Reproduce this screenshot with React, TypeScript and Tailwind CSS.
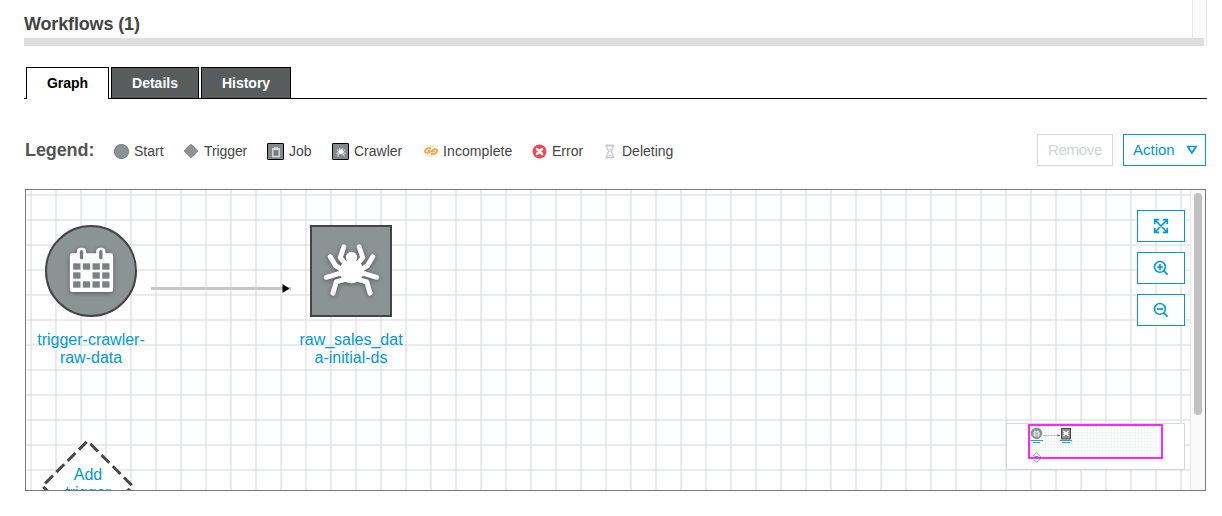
import React from 'react';

const SPIDER_LEGS =
  'M221 109L210 142L224 158M180 139L195 165L216 179M168 201L205 190H240M188 249L198 215L230 206M267 109L278 142L264 158M308 139L293 165L272 179M320 201L283 190H248M300 249L290 215L258 206';

function Spider({ className }: { className: string }) {
  return (
    <svg viewBox="155 95 178 165" className={className}>
      <path d={SPIDER_LEGS} fill="none" stroke="#fff" strokeWidth="15" strokeLinecap="round" strokeLinejoin="round" />
      <circle cx="244" cy="141" r="17" fill="#fff" />
      <path d="M232 150H256C272 156 283 168 281 184C279 203 262 219 244 219C226 219 209 203 207 184C205 168 216 156 232 150Z" fill="#fff" />
    </svg>
  );
}

function Calendar({ className }: { className: string }) {
  const cells = [0, 1, 2].flatMap((r) => [0, 1, 2, 3].map((c) => [r, c])).filter(([r, c]) => !(r === 1 && c === 1));
  return (
    <svg viewBox="146 186 134 138" className={className}>
      <rect x="148" y="205" width="130" height="116" rx="7" fill="#fff" />
      <rect x="169" y="188" width="28" height="44" rx="12" fill="#fff" />
      <rect x="227" y="188" width="28" height="44" rx="12" fill="#fff" />
      <rect x="178" y="195" width="10" height="28" rx="5" fill="#747c7c" />
      <rect x="236" y="195" width="10" height="28" rx="5" fill="#747c7c" />
      {cells.map(([r, c]) => (
        <rect key={`${r}-${c}`} x={158 + c * 29} y={235 + r * 27} width="22" height="19" fill="#7a8282" />
      ))}
    </svg>
  );
}

function Tab({ label, width, active }: { label: string; width: string; active?: boolean }) {
  return (
    <div
      className={`flex items-center justify-center border border-black text-[14px] font-bold ${width} ${
        active ? 'h-[32px] border-b-0 bg-white pb-px text-black' : 'h-[32px] bg-[#585c5c] text-white'
      }`}
    >
      {label}
    </div>
  );
}

function LegendItem({ label, className, children }: { label: string; className: string; children: React.ReactNode }) {
  return (
    <div className={`flex shrink-0 items-center whitespace-nowrap text-[14px] ${className}`}>
      {children}
      <span>{label}</span>
    </div>
  );
}

function Clipboard() {
  return (
    <svg viewBox="0 0 10 12" className="h-3 w-2.5">
      <rect x="1.8" y="2.8" width="6.4" height="7.7" fill="#747c7c" stroke="#d5dada" strokeWidth="1.5" />
      <rect x="3" y="1.2" width="4" height="3" fill="#d5dada" />
    </svg>
  );
}

function Magnifier({ plus }: { plus?: boolean }) {
  return (
    <svg viewBox="0 0 16 16" className="size-4" fill="none" stroke="#0099d6" strokeWidth="1.6">
      <circle cx="6.9" cy="6.9" r="5.4" />
      <path d="M10.8 10.8L14.6 14.6" strokeWidth="1.8" />
      <path d={plus ? 'M4 7H10M7 4V10' : 'M4 7H10'} strokeWidth="1.7" />
    </svg>
  );
}

function ToolButton({ children }: { children: React.ReactNode }) {
  return (
    <button className="flex h-8 w-12 items-center justify-center border border-[#0099d6] bg-white">{children}</button>
  );
}

function MiniMap() {
  return (
    <svg viewBox="0 0 179 48" className="absolute left-[980px] top-[233px] h-12 w-[179px]">
      <defs>
        <pattern id="dots" width="3" height="3" patternUnits="userSpaceOnUse">
          <path d="M0 .5H3M.5 0V3" stroke="#eef0f0" strokeWidth=".6" />
        </pattern>
      </defs>
      <rect x=".5" y=".5" width="178" height="46" fill="#fff" stroke="#d5d8d8" />
      <rect x="22" y="1" width="134" height="34" fill="url(#dots)" />
      <path d="M37 12.5H52" stroke="#c4c4c4" />
      <path d="M51.5 11L54 12.5L51.5 14" fill="#777" />
      <circle cx="30.5" cy="10.3" r="5.4" fill="#8a9292" stroke="#6e7575" strokeWidth=".6" />
      <path d="M28 9H33V13H28ZM29 7.5V9M32 7.5V9M28 11H33" fill="none" stroke="#fff" strokeWidth=".9" />
      <rect x="55.5" y="5.5" width="9" height="10.5" fill="#899191" stroke="#484a4a" />
      <path d="M57.5 8L62.5 13M62.5 8L57.5 13M57.5 10.5H62.5" stroke="#fff" strokeWidth="1.2" />
      <path d="M24.5 17.5H37M27 19.5H34M54 17.5H66M56 19.5H64" stroke="#2b9fd4" strokeWidth="1" />
      <path d="M30.3 29.5L35.3 34.5L30.3 39.5L25.3 34.5Z" fill="#fff" stroke="#777" strokeWidth=".8" strokeDasharray="3 .8" />
      <rect x="23" y="2" width="133" height="33" fill="none" stroke="#ff10ff" strokeWidth="1.8" />
      <path d="M28.5 33.5H32.5" stroke="#2b9fd4" strokeWidth="1.2" />
    </svg>
  );
}

export default function App() {
  return (
    <div className="h-[516px] w-[1222px] overflow-hidden bg-white font-['Liberation_Sans',Arial,sans-serif] text-[#444]">
      <header className="flex h-[46px] flex-col pl-6">
        <div className="flex h-[38px] w-[1183px] justify-between">
          <h1 className="pt-[10px] text-[18px] font-bold leading-7 tracking-[-0.15px]">Workflows (1)</h1>
          <div className="h-[46px] w-[15px] border-x border-[#e8e8e8] bg-[#fafafa]" />
        </div>
        <div className="relative h-2 w-[1180px] shrink-0 bg-[#dedede]" />
      </header>

      <nav className="ml-6 mt-[21px] flex h-8 w-[1183px]">
        <div className="w-0.5 border-b border-black" />
        <Tab label="Graph" width="w-[83px]" active />
        <div className="w-0.5 border-b border-black" />
        <Tab label="Details" width="w-[88px]" />
        <div className="w-0.5 border-b border-black" />
        <Tab label="History" width="w-[90px]" />
        <div className="flex-1 border-b border-black" />
      </nav>

      <div className="ml-[25px] mt-[35px] flex h-8 w-[1181px] items-center">
        <div className="w-[89px] shrink-0 text-[18px] font-bold tracking-[-0.1px] text-[#545454]">Legend:</div>
        <LegendItem label="Start" className="w-[69px] gap-[5px] pt-0.5">
          <span className="size-[15px] rounded-full border border-[#6e7575] bg-[#8b9393]" />
        </LegendItem>
        <LegendItem label="Trigger" className="w-[84px] gap-[5px] pt-0.5 tracking-[-0.1px]">
          <svg viewBox="0 0 16 16" className="size-4">
            <path d="M8 1.2L14.8 8L8 14.8L1.2 8Z" fill="#8b9393" stroke="#7a8282" />
          </svg>
        </LegendItem>
        <LegendItem label="Job" className="w-[65px] gap-[5px] pt-[3px]">
          <span className="flex size-[17px] items-center justify-center rounded-[1px] border border-black bg-[#818989]">
            <Clipboard />
          </span>
        </LegendItem>
        <LegendItem label="Crawler" className="w-[91px] gap-[5px] pt-[3px]">
          <span className="flex size-[17px] items-center justify-center rounded-[1px] border border-black bg-[#818989]">
            <Spider className="size-[10px]" />
          </span>
        </LegendItem>
        <LegendItem label="Incomplete" className="w-[109px] gap-1 pt-0.5 tracking-[0.1px]">
          <svg viewBox="0 0 16 16" className="size-4" fill="none" stroke="#f8a64e" strokeLinecap="round">
            <path d="M7.2 5.3C4.9 4.5 1.8 6.3 1.9 8.4C2.1 10.3 4.6 10 6.5 9M8.8 10.8C11.1 11.6 14.2 9.8 14.1 7.7C13.9 5.8 11.4 6.1 9.5 7.1" strokeWidth="2" />
            <path d="M5.4 7.5L8 8.2L11 8.4" strokeWidth="1.6" />
            <path d="M7.8 2.9L8 3.6M10.3 2.7L9.8 3.6M12.2 3.6L11.6 4M4 12.2L4.4 12M6 13.5L6.3 12.7M8.4 13.3L8.1 12.6" strokeWidth=".8" />
          </svg>
        </LegendItem>
        <LegendItem label="Error" className="w-[72px] gap-[5px] pt-0.5">
          <svg viewBox="0 0 15 15" className="size-[15px]">
            <circle cx="7.5" cy="7.5" r="6.9" fill="#f6454f" />
            <path d="M5 5L10 10M10 5L5 10" stroke="#fff" strokeWidth="2.5" strokeLinecap="round" />
          </svg>
        </LegendItem>
        <LegendItem label="Deleting" className="gap-1.5 pt-0.5">
          <svg viewBox="0 0 12 15" className="h-[15px] w-3" fill="none" stroke="#cbcbcb">
            <path d="M1.5 1.5H10.5M1.5 13.5H10.5" strokeWidth="1.8" />
            <path d="M3 2V4.5L5 7.5L3 10.5V13M9 2V4.5L7 7.5L9 10.5V13" strokeWidth="1.3" />
            <path d="M4.5 5H7.5L6 7Z M4 12L6 10L8 12Z" fill="#d5d5d5" stroke="none" />
          </svg>
        </LegendItem>
        <div className="ml-auto flex gap-2.5 text-[15px]">
          <button className="h-8 w-[76px] border border-[#d5d9d9] tracking-[-0.3px] text-[#d0d5d5]">Remove</button>
          <button className="flex h-8 w-[83px] items-center border border-[#0099d6] pl-[9px] text-[#0099d6]">
            Action
            <svg viewBox="0 0 12 10" className="ml-[11px] h-2.5 w-3">
              <path d="M1.7 1.5H10.1L5.9 8Z" fill="none" stroke="#0099d6" strokeWidth="1.7" />
            </svg>
          </button>
        </div>
      </div>

      <main className="ml-[25px] mt-[23px] flex h-[302px] w-[1181px] border border-[#777]">
        <div className="relative w-[1164px] overflow-hidden bg-[linear-gradient(to_right,#d5d9d980_2px,transparent_2px),linear-gradient(to_bottom,#d5d9d980_2px,transparent_2px)] bg-[size:25px_25px] bg-[position:4px_4px]">
          <div className="absolute left-[19px] top-[35px] flex size-[92px] items-center justify-center rounded-full border-2 border-[#444] bg-[#8b9393]">
            <Calendar className="mb-0.5 h-[46px] w-[45px] drop-shadow-[0_1px_2px_#555]" />
          </div>
          <div className="absolute left-0 top-[141px] w-[130px] text-center text-[16px] leading-[18px] text-[#0099d6]">
            trigger-crawler-
            <br />
            raw-data
          </div>

          <svg viewBox="0 0 141 10" className="absolute left-[125px] top-[93px] h-2.5 w-[141px]">
            <path d="M0 5.5H140" stroke="#c8c6c7" strokeWidth="3" />
            <path d="M131.5 1L138.5 5.5L131.5 10Z" fill="#000" />
          </svg>

          <div className="absolute left-[284px] top-[35px] flex h-[92px] w-[82px] items-center justify-center border-2 border-[#444] bg-[#8b9393]">
            <Spider className="mb-1 h-[55px] w-[59px] drop-shadow-[0_1px_2px_#555]" />
          </div>
          <div className="absolute left-[260px] top-[141px] w-[130px] text-center text-[16px] leading-[18px] text-[#0099d6]">
            raw_sales_dat
            <br />
            a-initial-ds
          </div>

          <svg viewBox="0 0 100 100" className="absolute left-[12px] top-[247px] size-[100px]">
            <path d="M49.5 4L94.5 49L49.5 94L4.5 49Z" fill="#fff" stroke="#484848" strokeWidth="3" strokeDasharray="11 4.9" strokeDashoffset="12" />
          </svg>
          <div className="absolute left-[12px] top-[276px] w-[100px] text-center text-[16px] leading-[18px] text-[#0099d6]">
            Add
            <br />
            trigger
          </div>

          <div className="absolute left-[1111px] top-5 flex flex-col gap-2.5">
            <ToolButton>
              <svg viewBox="0 0 16 16" className="size-4" fill="none" stroke="#0099d6" strokeWidth="1.7">
                <path d="M1.7 6.2V1.7H6.2M9.8 1.7H14.3V6.2M14.3 9.8V14.3H9.8M6.2 14.3H1.7V9.8M2 2L14 14M14 2L2 14" />
              </svg>
            </ToolButton>
            <ToolButton>
              <Magnifier plus />
            </ToolButton>
            <ToolButton>
              <Magnifier />
            </ToolButton>
          </div>
          <MiniMap />
        </div>
        <div className="flex-1 border-l border-[#e8e8e8] bg-[#fafafa] pl-[3px] pt-[3px]">
          <div className="h-[222px] w-2 rounded-full bg-[#c1c1c1]" />
        </div>
      </main>
    </div>
  );
}
